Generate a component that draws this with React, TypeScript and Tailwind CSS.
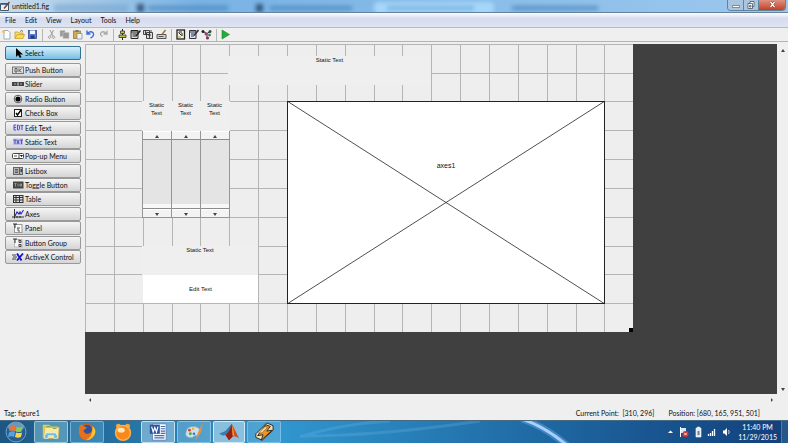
import React from "react";

const icon: Record<string, React.ReactNode> = {
  select: <path d="M4 0v9l2-2 2 3 1.500-1-1.500-2.500h3z" fill="#000" />,
  push: (
    <g>
      <rect x=".5" y="2" width="11" height="6.500" fill="#ddd" stroke="#777" />
      <path d="M3 3.500v3.500h2v-3.500zM7 3.500v3.500M9.500 3.500l-2 2 2 1.500" fill="none" stroke="#444" strokeWidth=".8" />
    </g>
  ),
  slider: (
    <g>
      <rect x="0" y="3" width="12" height="4" fill="#444" />
      <path d="M2 5h2M8 5h2" stroke="#aaa" />
      <rect x="5" y="3.500" width="2" height="3" fill="#999" />
    </g>
  ),
  radio: (
    <g>
      <circle cx="6" cy="5" r="3.800" fill="#fff" stroke="#555" />
      <circle cx="6" cy="5" r="2.600" fill="#000" />
    </g>
  ),
  check: (
    <g>
      <rect x="2.500" y="1.500" width="7" height="7" fill="#fff" stroke="#222" />
      <path d="M4 5l1.500 2L9 2" fill="none" stroke="#000" strokeWidth="1.400" />
    </g>
  ),
  edit: (
    <g>
      <rect x="1" y="1.500" width="10" height="6.500" fill="#d4d4f2" />
      <path d="M4 2H2v5h2M2 4.500h2M5.500 2v5h1l1-1V3l-1-1zM8.500 2.500h3M10 2v5" fill="none" stroke="#4a4ab8" strokeWidth=".9" />
    </g>
  ),
  static: (
    <g>
      <rect x="1" y="1.500" width="10" height="6.500" fill="#bcbce8" />
      <path d="M1.500 3h3M3 3v4M5 3l2 4M7 3l-2 4M8 3h3M9.500 3v4" fill="none" stroke="#4a4ab8" strokeWidth=".9" />
    </g>
  ),
  popup: (
    <g>
      <rect x=".5" y="2.500" width="11" height="5" rx="1" fill="#fff" stroke="#444" />
      <path d="M2 5h3" stroke="#555" />
      <path d="M7 2.500v5" stroke="#444" />
      <path d="M8 4h3L9.500 6z" fill="#000" />
    </g>
  ),
  list: (
    <g>
      <rect x="1.500" y="1.500" width="9" height="7" fill="#b4b4b4" stroke="#666" />
      <path d="M3 3.500h3M3 5h3M3 6.500h3M7.500 2v6" stroke="#555" strokeWidth=".9" />
      <rect x="8.500" y="3" width="1.500" height="3" fill="#444" />
    </g>
  ),
  toggle: (
    <g>
      <rect x="1" y="1.500" width="10.500" height="7" fill="#444" />
      <path d="M2.500 3.500h2M3.500 3.500v3M6 3.500v3M8 4h1.500v2H8z" stroke="#aaa" fill="none" strokeWidth=".8" />
    </g>
  ),
  table: (
    <g>
      <rect x="1.500" y="1.500" width="9.500" height="7" fill="#ddd" stroke="#333" />
      <path d="M1 3.500h10M1 6h10M4 1v8M7.500 1v8" stroke="#333" />
    </g>
  ),
  axes: (
    <g fill="none">
      <path d="M2.500 0v9.500M0 8h12M5 7v2M8 7v2" stroke="#222" strokeWidth=".9" />
      <path d="M3 7l2-4 2 2 1-2 1 2 2.500-4" stroke="#2424c0" strokeWidth="1.100" />
    </g>
  ),
  panel: (
    <g>
      <rect x="2.500" y="1.500" width="7.500" height="8" fill="#f8f8f8" stroke="#999" />
      <path d="M1 1h4M3 1v4" stroke="#333" />
      <path d="M5 5h3M6 5v3h2" stroke="#555" fill="none" />
    </g>
  ),
  group: (
    <g>
      <rect x="2.500" y="1.500" width="7.500" height="7.500" fill="#f8f8f8" stroke="#bbb" />
      <path d="M1 1h4M3 1v4" stroke="#333" />
      <path d="M7 1.500v3h2v-2H7M7 6v2.500h2V6.500H7" stroke="#444" fill="none" />
    </g>
  ),
  activex: (
    <g>
      <path d="M0 3h4M1 5h4M0 7h4" stroke="#445" />
      <path d="M5 1.500l4.500 7M11 1.500l-6 7" stroke="#1515c8" strokeWidth="1.900" />
    </g>
  ),
};

const palette: [string, string][] = [
  ["push", "Push Button"],
  ["slider", "Slider"],
  ["radio", "Radio Button"],
  ["check", "Check Box"],
  ["edit", "Edit Text"],
  ["static", "Static Text"],
  ["popup", "Pop-up Menu"],
  ["list", "Listbox"],
  ["toggle", "Toggle Button"],
  ["table", "Table"],
  ["axes", "Axes"],
  ["panel", "Panel"],
  ["group", "Button Group"],
  ["activex", "ActiveX Control"],
];

const tools: [string, React.ReactNode][][] = [
  [
    ["New", <g><path d="M3 1.500h4l2 2v6.500H3z" fill="#fff" stroke="#89a" strokeWidth=".8" /><circle cx="2.500" cy="2.500" r="1.500" fill="#e8c36a" /></g>],
    ["Open", <g><path d="M1 9.500V3h3l1 1h4v2" fill="#f6df7c" stroke="#c59a22" strokeWidth=".8" /><path d="M1 9.500L3 5.500h7.500L9 9.500z" fill="#fbd954" stroke="#c59a22" strokeWidth=".7" /><path d="M6 2.500q2-2 3 0" fill="none" stroke="#576" /></g>],
    ["Save", <g><rect x="1.500" y="1.500" width="8" height="8" fill="#5b7ed0" stroke="#2c4a94" strokeWidth=".8" /><rect x="3" y="1.500" width="5" height="3.500" fill="#f3f6ff" /><rect x="3.500" y="6.500" width="4" height="3" fill="#233c80" /></g>],
  ],
  [
    ["Cut", <path d="M4 1l3 6M7.500 1L4.500 7M3.500 7a1.200 1.200 0 1 0 .1 0M7.500 7a1.200 1.200 0 1 0 .1 0" fill="none" stroke="#999" />],
    ["Copy", <g fill="#999" stroke="#c8c8c8" strokeWidth=".5"><path d="M1 1.500h5v6H1z" /><path d="M4 3.500h6v6H4z" /></g>],
    ["Paste", <g><rect x="1.500" y="2" width="7" height="7.500" fill="#d2aa50" stroke="#8a713a" strokeWidth=".7" /><rect x="3.500" y="1" width="3" height="2" fill="#777" /><path d="M5 4.500h5v5.500H5z" fill="#edf3fc" stroke="#789" strokeWidth=".7" /></g>],
    ["Undo", <path d="M2 1.500v3.500h3.500M2.500 4.500q3-3 5.500-.8q2 3-2.500 5.500" fill="none" stroke="#3e6cd2" strokeWidth="1.400" />],
    ["Redo", <path d="M9 1.500v3.500H5.500M8.500 4.500q-3-3-5.500-.8q-1.500 2 1.500 3.800" fill="none" stroke="#aaa" strokeWidth="1.300" />],
  ],
  [
    ["Align Objects", <g><path d="M5.500 0v11" stroke="#222" /><path d="M3.500 2h4v2.500h-4zM2 6h7v2.500H2z" fill="#c5c13a" stroke="#333" strokeWidth=".8" /></g>],
    ["Menu Editor", <g><path d="M1 1.500h7v8H1z" fill="#ddd" stroke="#222" /><path d="M1 3h8M2.500 5h4M2.500 7h4" stroke="#222" /><path d="M10.500 1.500L6 7" stroke="#222" strokeWidth="1.500" /></g>],
    ["Tab Order Editor", <g fill="#ddd" stroke="#333" strokeWidth=".9"><path d="M.5 1.500h6v4h-6zM3.500 3.500h6v6h-6z" /><path d="M2.500 1v4M6.500 5v4M8 1v2M5 6h3" /></g>],
    ["Toolbar Editor", <g><path d="M1 5.500h9v4H1z" fill="#ccd5e2" stroke="#333" strokeWidth=".8" /><path d="M2.500 7.500h5" stroke="#555" /><path d="M9.500 1L6 5.500" stroke="#a66e28" strokeWidth="1.400" /></g>],
  ],
  [
    ["M-file Editor", <g><rect x="2" y="1" width="7.500" height="9" fill="#f2f2dd" stroke="#222" strokeWidth="1.300" /><path d="M3.500 3.500l3 3M4 3h3M7 4v3" fill="none" stroke="#222" /><path d="M3 8h3" stroke="#c9a030" /></g>],
    ["Property Inspector", <g><path d="M1.500 1.500h6.500v8H1.500z" fill="#dce5f2" stroke="#334" /><path d="M2 3h6M3 5h3M3 7h3" stroke="#334" /><path d="M10.500 1L6 6.500" stroke="#334" strokeWidth="1.600" /></g>],
    ["Object Browser", <g><path d="M2 2.500l4 2M6 4.500l3-2M6 4.500v4" stroke="#333" /><g><circle cx="2" cy="2.500" r="1.500" fill="#222" /><circle cx="9" cy="2.500" r="1.500" fill="#444" /><circle cx="5" cy="5" r="1.500" fill="#a03a78" /><circle cx="8.500" cy="6" r="1.400" fill="#3a8060" /><circle cx="6.500" cy="9" r="1.600" fill="#8a2f5f" /></g></g>],
  ],
  [["Run Figure", <path d="M2 1l7.500 4.500L2 10z" fill="#23ad38" stroke="#138627" strokeWidth=".6" />]],
];

const gridX = [0, 29, 58, 87, 115, 144, 173, 202, 231, 260, 289, 317, 346, 375, 404, 433, 462, 491, 519];
const gridY = [0, 29, 57, 86, 115, 144, 173, 202, 230, 259];

function Arrow({ dir, label, className = "" }: { dir: "u" | "d" | "l" | "r"; label: string; className?: string }) {
  const d = { u: "M0 4h4L2 1z", d: "M0 1h4L2 4z", l: "M3 0v4L1 2z", r: "M1 0v4l2-2z" }[dir];
  return (
    <button aria-label={label} className={`flex items-center justify-center ${className}`}>
      <svg width="4" height="4" viewBox="0 0 4 4"><path d={d} fill="#444" /></svg>
    </button>
  );
}

function CanvasSlider({ n }: { n: number }) {
  return (
    <div className="flex h-[87px] w-[29px] flex-col border-r border-b border-[#969696] bg-[#f3f3f3]">
      <Arrow dir="u" label={`Increase slider ${n}`} className="h-2 w-full border-t border-white" />
      <input
        type="range"
        aria-label={`Slider ${n}`}
        defaultValue={0}
        className="m-0 min-h-0 w-full flex-1 appearance-none border-t border-[#8c8c8c] bg-[#e4e4e4] [direction:rtl] [writing-mode:vertical-lr] [&::-webkit-slider-thumb]:h-[5px] [&::-webkit-slider-thumb]:w-[28px] [&::-webkit-slider-thumb]:appearance-none [&::-webkit-slider-thumb]:border-b [&::-webkit-slider-thumb]:border-[#8c8c8c] [&::-webkit-slider-thumb]:bg-[#f8f8f8]"
      />
      <Arrow dir="d" label={`Decrease slider ${n}`} className="h-2 w-full border-t border-white" />
    </div>
  );
}

function Canvas() {
  return (
    <div className="relative h-[288px] w-[548px] bg-[#eeeeee] font-['Liberation_Sans',Arial,sans-serif] text-[6px] leading-[8px] text-[#111]">
      <svg className="absolute inset-0" width="548" height="288" shapeRendering="crispEdges">
        {gridX.map((x) => <path key={x} d={`M${x + 0.5} 0v288`} stroke="#b5b5b5" />)}
        {gridY.map((y) => <path key={y} d={`M0 ${y + 0.5}h548`} stroke="#b5b5b5" />)}
      </svg>
      <div className="absolute top-3 left-[143px] h-[29px] w-[203px] bg-[#efefef] text-center">Static Text</div>
      <div className="absolute top-[57px] left-[57px] flex h-[30px] w-[88px] bg-[#efefef] text-center">
        {[1, 2, 3].map((n) => <div key={n} className="w-[29px] px-1">Static Text</div>)}
      </div>
      <div className="absolute top-[87px] left-[57px] flex border-l border-[#969696]">
        {[1, 2, 3].map((n) => <CanvasSlider key={n} n={n} />)}
      </div>
      <div className="absolute top-[202px] left-[57px] h-[29px] w-[116px] bg-[#efefef] text-center">Static Text</div>
      <input aria-label="Edit Text" defaultValue="Edit Text" className="absolute top-[231px] left-[58px] h-7 w-[115px] bg-white text-center" />
      <div className="absolute top-[57px] left-[202px] h-[203px] w-[318px] bg-white">
        <svg width="318" height="203" viewBox="0 0 318 203" fill="none" stroke="#222" strokeWidth="1">
          <path d="M.5 .5h317v202H.5z" shapeRendering="crispEdges" />
          <path d="M0 0l318 203M318 0L0 203" strokeWidth=".8" />
        </svg>
        <span className="absolute inset-x-0 top-[61px] text-center text-[7px]">axes1</span>
      </div>
      <div className="absolute right-0 bottom-0 size-1 bg-black" />
    </div>
  );
}

const apps: [string, string, React.ReactNode][] = [
  ["Windows Explorer", "w-[34px] border-[#b9e0f0]/70 bg-[#8ac9da]/50", (
    <g><path d="M2 3h7l2 2h8v13H2z" fill="#e7c75b" /><path d="M4 6h16l-1 12H3z" fill="#fae99b" stroke="#cca944" strokeWidth=".7" /><path d="M6 5h4M13 7h4" stroke="#5aa56b" /><path d="M6 12h10l2 3v3h-4v-3H8v3H4v-3z" fill="#70bde4" stroke="#d7f1fb" strokeWidth=".8" /></g>
  )],
  ["Firefox", "w-[34px] border-[#9bd0ed]/60 bg-[#7cc2e6]/30", (
    <g><circle cx="11" cy="11" r="9" fill="#e05e14" /><circle cx="11" cy="8.500" r="5.500" fill="#31539f" /><path d="M2 8q0-4 3-6 0 2 3 3l3 1-2 2-2 1q1 4 5 4 4-1 5-5 3 5-1 9-4 4-9 2-5-2-5-11z" fill="#e8701a" /><path d="M17 4q6 6 1 12-3 4-8 4 8-4 7-16z" fill="#f7c536" /></g>
  )],
  ["GOM Player", "w-[33px] border-transparent", (
    <g><path d="M3 3l5 1 1 3-5 2zM19 3l-5 1-1 3 5 2z" fill="#e98b20" /><circle cx="6" cy="4.500" r="2.600" fill="#f6a63b" /><circle cx="16" cy="4.500" r="2.600" fill="#f6a63b" /><circle cx="11" cy="12" r="9" fill="#f9b04a" /><circle cx="11" cy="12" r="7.300" fill="#f8881a" /><ellipse cx="9" cy="9" rx="4" ry="2.600" fill="#ffe6b0" /></g>
  )],
  ["Word", "w-[34px] border-[#d5ecf8]/80 bg-[#b8dcf0]/50", (
    <g><path d="M5 2h15v18H5z" fill="#f7fbff" stroke="#5878ad" strokeWidth=".8" /><path d="M7 15h11M7 17.500h11M14 5h5M14 7.500h5M14 10h5M14 12.500h5" stroke="#4a6db0" strokeWidth="1.200" /><path d="M2 3h11v10H2z" fill="#2b529d" /><path d="M4 5l1.700 6L7.500 6l1.800 5L11 5" fill="none" stroke="#fff" strokeWidth="1.300" /></g>
  )],
  ["Paint", "w-[34px] border-[#a9d7ef]/60 bg-[#8fcbea]/40", (
    <g><path d="M2 12Q3 4 12 5q8 2 5 8-2 3-5 2-3 3-6 2-5-1-4-5z" fill="#cfe0e8" stroke="#8da9b8" strokeWidth=".7" /><circle cx="7" cy="13" r="1.600" fill="#58a943" /><circle cx="6" cy="9" r="1.500" fill="#d64234" /><circle cx="10" cy="7.500" r="1.400" fill="#e8b631" /><circle cx="11" cy="13" r="1.400" fill="#3474c7" /><path d="M21 0l-5 10-4 11 7-10z" fill="#dd9346" /></g>
  )],
  ["MATLAB", "w-[32px] border-[#e5f4fb]/80 bg-[#c5e3f2]/60", (
    <g><path d="M0 13l7-3 7-8-4 15-3-3-2 1z" fill="#387db0" /><path d="M14 2q3 6 8 16-4-3-7-2l-4 4-4-6q4-1 7-12z" fill="#d14a1c" /><path d="M14 2l1 14-4 4-4-6q4-1 7-12z" fill="#8d231b" /><path d="M14 3q2 5 3 12l-2 0z" fill="#f19a32" /></g>
  )],
  ["Winamp", "w-[34px] border-[#a9d7ef]/50 bg-[#8fcbea]/30", (
    <g stroke="#33302c" strokeWidth="1.100" strokeLinejoin="round"><path d="M2 13L14 1l7 3v5L9 20l-7-3z" fill="#f2e2ba" /><path d="M13 3l5 2-4 5 6-1L8 20l2-6-6 1z" fill="#f5941f" /><path d="M12 5l3 1-6 6H5z" fill="#ffd07a" strokeWidth=".5" /></g>
  )],
];

export default function App() {
  return (
    <div className="flex h-screen w-full flex-col overflow-hidden bg-[#efefef] font-[Lato,'Noto_Sans',sans-serif] text-[7px] leading-[10px] text-[#111]">
      <header className="relative flex h-[13px] shrink-0 items-center overflow-hidden border-b border-[#63829d] bg-[#76b1e3]">
        <div className="absolute inset-0 bg-linear-to-r from-[#c9dded] via-[#78b2e4] via-25% to-[#9cc8ee]" />
        <div className="absolute inset-0 blur-[2px]">
          <div className="absolute top-1 left-[54px] h-2 w-[74px] bg-[#78a4ca]/60" />
          <div className="absolute top-1 left-[137px] h-2 w-[7px] bg-[#35577c]" />
          <div className="absolute top-[6px] left-[148px] h-1 w-[80px] bg-[#427db4]/70" />
          <div className="absolute top-1 left-[256px] h-2 w-[7px] bg-[#30567e]" />
          <div className="absolute top-[6px] left-[270px] h-1 w-[82px] bg-[#427db4]/70" />
          <div className="absolute top-[2px] left-[374px] h-3 w-[120px] rounded bg-[#a6d6fa]" />
          <div className="absolute top-[6px] left-[387px] h-1 w-[87px] bg-[#6ba5d4]/70" />
          <div className="absolute top-[6px] left-[512px] h-1 w-[86px] bg-[#427db4]/70" />
        </div>
        <div className="relative flex items-center gap-[2px]">
          <svg width="10" height="11" viewBox="0 0 10 11"><path d="M.5 2.500h8v7h-8z" fill="#eef2f8" stroke="#456" /><path d="M1 3.500h7" stroke="#4a7ab8" /><path d="M9.500 1L4 7.500" stroke="#7a3f28" strokeWidth="1.500" /></svg>
          <span>untitled1.fig</span>
        </div>
        <div className="relative mr-[2px] mb-[2px] ml-auto flex h-[11px] overflow-hidden rounded-b-sm border border-t-0 border-[#65829d]">
          <button aria-label="Minimize" className="flex w-4 items-center justify-center border-r border-[#65829d] bg-[#aac6de]"><svg width="8" height="8"><path d="M.500 4.500h7v2h-7z" fill="#fff" stroke="#567" strokeWidth=".7" /></svg></button>
          <button aria-label="Restore" className="flex w-[15px] items-center justify-center border-r border-[#65829d] bg-[#aac6de]"><svg width="8" height="8" fill="#fff" stroke="#456" strokeWidth=".8"><path d="M3 .5h4v5H3z" /><path d="M1 2.500h4.500v5H1zM2.500 4.500h1.500v1.500H2.500z" /></svg></button>
          <button aria-label="Close" className="flex w-[26px] items-center justify-center bg-linear-to-b from-[#dd9180] to-[#c43c22]"><svg width="7" height="7" fill="none"><path d="M1.500 1l4 5M5.500 1l-4 5" stroke="#733" strokeWidth="2.400" /><path d="M1.500 1l4 5M5.500 1l-4 5" stroke="#fff" strokeWidth="1.300" /></svg></button>
        </div>
      </header>

      <nav className="flex h-[15px] shrink-0 items-center gap-[9px] border-b border-[#bababa] bg-linear-to-b from-[#fbfcfe] via-[#d6dcee] via-40% to-[#dfe4f3] pl-[5px]">
        {["File", "Edit", "View", "Layout", "Tools", "Help"].map((m) => <button key={m}>{m}</button>)}
      </nav>

      <div role="toolbar" className="flex h-[14px] shrink-0 items-center border-b border-[#b4b4b4]">
        {tools.map((group, i) => (
          <React.Fragment key={i}>
            {i > 0 && <div className="flex h-3 w-[6px] justify-center"><div className="w-px bg-[#b5b5b5]" /></div>}
            {group.map(([name, art]) => (
              <button key={name} aria-label={name} className="flex w-[13px] justify-center"><svg width="11" height="11" viewBox="0 0 11 11">{art}</svg></button>
            ))}
          </React.Fragment>
        ))}
      </div>

      <main className="flex min-h-0 flex-1 pt-[2px]">
        <aside className="w-[85px] shrink-0 pt-[2px] pr-1 pl-[5px]">
          <button className="mb-[3px] flex h-[14px] w-full items-center gap-px rounded-[2px] border border-[#34708f] bg-linear-to-b from-[#d7effb] to-[#75bfe4] pl-[6px]">
            <svg width="12" height="10" viewBox="0 0 12 10">{icon.select}</svg>Select
          </button>
          <div className="flex h-[201px] flex-col justify-between">
            {palette.map(([key, label]) => (
              <button key={key} className="flex h-[14px] w-full items-center gap-px rounded-[2px] border border-[#999] bg-linear-to-b from-[#f5f5f5] to-[#d5d5d5] pl-[6px] whitespace-nowrap">
                <svg width="12" height="10" viewBox="0 0 12 10">{icon[key]}</svg>{label}
              </button>
            ))}
          </div>
        </aside>
        <section className="flex min-w-0 flex-1 flex-col">
          <div className="flex min-h-0 flex-1">
            <div className="min-w-0 flex-1 overflow-hidden bg-[#404040]"><Canvas /></div>
            <div className="flex w-[11px] flex-col justify-between">
              <Arrow dir="u" label="Scroll up" className="h-[11px]" />
              <Arrow dir="d" label="Scroll down" className="h-[11px]" />
            </div>
          </div>
          <div className="flex h-[11px] shrink-0 justify-between pr-[11px]">
            <Arrow dir="l" label="Scroll left" className="w-[9px]" />
            <Arrow dir="r" label="Scroll right" className="w-[11px]" />
          </div>
        </section>
      </main>

      <footer className="flex h-[15px] shrink-0 items-center pr-7 pl-1">
        <span>Tag: figure1</span>
        <span className="ml-auto whitespace-pre">Current Point:  [310, 296]</span>
        <span className="ml-[14px]">Position: [680, 165, 951, 501]</span>
      </footer>

      <div className="relative flex h-[23px] shrink-0 items-stretch gap-[2px] overflow-hidden border-t border-[#476a83] bg-linear-to-r from-[#1d5682] via-[#3197cf] via-35% to-[#123f7b]">
        <svg className="absolute inset-0 h-full w-full" viewBox="0 0 788 22" preserveAspectRatio="none" fill="none">
          <path d="M300 16Q340 3 390 0M300 15q80 0 180-15" stroke="#75bce6" strokeWidth="3" opacity=".25" />
          <path d="M522-2Q546 6 569 26" stroke="#67aaed" strokeWidth="7" opacity=".45" />
          <path d="M522-2Q546 6 569 26" stroke="#a7d0fa" strokeWidth="3" />
        </svg>
        <button aria-label="Start" className="relative flex w-8 items-center justify-center">
          <svg width="22" height="22" viewBox="0 0 22 22"><circle cx="11" cy="11" r="10" fill="#285f91" stroke="#7eafd0" strokeWidth=".8" /><ellipse cx="11" cy="6" rx="8" ry="4.500" fill="#8ab8d3" opacity=".65" /><path d="M5 6q3-2 5.500-.5L10 10q-3-1.500-6 .5z" fill="#ef7136" /><path d="M11.500 6q3 1 6-.5l-1 5q-3 1-5.500 0z" fill="#91c94a" /><path d="M4 11.500q3-2 6-.5l-1 5q-2-1.500-6 0z" fill="#50a4e6" /><path d="M11 11.500q3 1 6 0l-1 4.500q-3 1.500-6 0z" fill="#fbd24b" /></svg>
        </button>
        {apps.map(([name, cls, art]) => (
          <button key={name} aria-label={name} className={`relative flex items-center justify-center rounded-[2px] border ${cls}`}>
            <svg width="20" height="20" viewBox="0 0 22 22">{art}</svg>
          </button>
        ))}
        <div className="relative mr-[11px] ml-auto flex items-center text-white">
          <svg width="66" height="12" viewBox="0 0 66 12">
            <path d="M2 7h5L4.500 4.500z" fill="#fff" />
            <path d="M14.500 1v10" stroke="#fff" /><path d="M15 2h5v5h-5z" fill="#dce8f5" /><circle cx="19.500" cy="8" r="3" fill="#d43330" /><path d="M18.300 6.800l2.400 2.400M20.700 6.800l-2.400 2.400" stroke="#fff" strokeWidth=".9" />
            <path d="M30 2h1.500V1h2v1H35v9h-5z" fill="#dfeaf1" stroke="#fff" strokeWidth=".6" /><path d="M31.500 5h2v4h-2z" fill="#6e8794" />
            <path d="M42.500 10V8M44.500 10V7M46.500 10V5M48.500 10V3" stroke="#fff" strokeWidth="1.300" />
            <path d="M57 4.500h1.500L61 2v8l-2.500-2.500H57z" fill="#fff" /><path d="M62.500 4q1.500 2 0 4" stroke="#fff" fill="none" strokeWidth=".8" />
          </svg>
          <div className="ml-[6px] text-center">11:40 PM<br />11/29/2015</div>
        </div>
        <button aria-label="Show desktop" className="absolute top-0 right-0 h-full w-[7px] border-l border-[#5f8db7]/70 bg-[#24578b]" />
      </div>
    </div>
  );
}
